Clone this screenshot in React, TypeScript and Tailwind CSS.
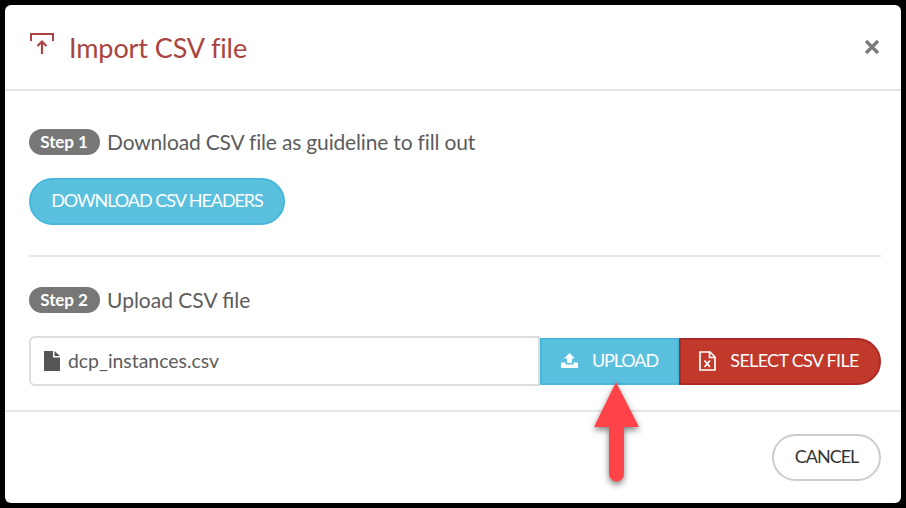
function StepBadge({ label }: { label: string }) {
  return (
    <span className="flex h-[26px] w-[71px] items-center justify-center rounded-[13px] bg-[#777777] pr-[1px] text-[17px] font-bold tracking-[-0.1px] text-white">
      {label}
    </span>
  );
}

export default function App() {
  return (
    <div className="h-[508px] w-[906px] overflow-hidden bg-black p-[5px] font-['Lato',sans-serif]">
      <div className="relative flex h-[498px] w-[896px] flex-col rounded-[6px] bg-white">
        {/* Header */}
        <div className="flex h-[86px] shrink-0 items-center justify-between border-b-2 border-[#e5e5e5] pl-6 pr-[21px]">
          <div className="flex items-center gap-[14px] text-[#a94442]">
            <svg width="26" height="26" viewBox="0 0 26 26" className="mb-[5px]" fill="none" stroke="currentColor" strokeWidth="2">
              <path d="M2 9V2h22v7" />
              <path d="M13 22V10M8.500 14 13 9.500l4.500 4.500" strokeWidth="2.200" />
            </svg>
            <h4 className="text-[27px] leading-none tracking-[-0.1px]">Import CSV file</h4>
          </div>
          <svg width="16" height="16" viewBox="0 0 16 16" stroke="#7a7a7a" strokeWidth="3.200">
            <path d="M2 2l12 12M14 2 2 14" />
          </svg>
        </div>

        {/* Body */}
        <div className="flex h-[321px] shrink-0 flex-col border-b-2 border-[#e5e5e5] pl-6 pr-5">
          <div className="mt-[38px] flex items-center gap-[7px]">
            <StepBadge label="Step 1" />
            <span className="text-[21px] leading-[26px] tracking-[-0.17px] text-[#5c5c5c]">Download CSV file as guideline to fill out</span>
          </div>
          <button className="mt-[23px] h-[47px] w-[256px] rounded-[24px] border-2 border-[#46b8da] bg-[#5bc0de] pb-[2px] text-[18px] tracking-[-1.05px] text-white">
            DOWNLOAD CSV HEADERS
          </button>
          <div className="mt-[30px] h-[2px] bg-[#e5e5e5]" />
          <div className="mt-[30px] flex items-center gap-[7px]">
            <StepBadge label="Step 2" />
            <span className="text-[21px] leading-[24px] text-[#5c5c5c]">Upload CSV file</span>
          </div>
          <div className="mt-[23px] flex h-[50px] items-center">
            <div className="flex h-[50px] w-[511px] shrink-0 items-center gap-[8px] rounded-l-[6px] border-2 border-[#dddddd] pl-[13px]">
              <svg width="16" height="20" viewBox="0 0 16 20" fill="#555555">
                <path d="M0 0h9v6.500h7V20H0z" />
                <path d="M10.500 0 16 5h-5.500z" />
              </svg>
              <span className="text-[19.400px] text-[#5c5c5c]">dcp_instances.csv</span>
            </div>
            <button className="flex h-[47px] w-[139px] shrink-0 items-center justify-center gap-[14px] border-2 border-[#46b8da] bg-[#5bc0de] pb-[2px] text-[18px] tracking-[-1.100px] text-white">
              <svg width="17" height="15" viewBox="0 0 17 15" fill="white" className="mt-[1px]">
                <path d="M8.500 0 14 5.500h-3V10H6V5.500H3z" />
                <path d="M0 9.500h4.500v2h8v-2H17V15H0z" />
              </svg>
              UPLOAD
            </button>
            <button className="flex h-[47px] w-[202px] shrink-0 items-center justify-center gap-[14px] rounded-r-[24px] border-2 border-[#ac2925] bg-[#c0392b] pb-[2px] pr-[2px] text-[18px] tracking-[-0.7px] text-white">
              <svg width="17" height="20" viewBox="0 0 17 20" fill="none" stroke="white" strokeWidth="1.700" className="mt-[1px]">
                <path d="M1 1h10l5 5v13H1z" />
                <path d="M10.500 1v5.500H16" />
                <path d="M5.500 9.500l5.500 6.500M11 9.500 5.500 16" strokeWidth="1.800" />
              </svg>
              SELECT CSV FILE
            </button>
          </div>
        </div>

        {/* Footer */}
        <div className="flex flex-1 items-start justify-end px-5 pt-[22px]">
          <button className="h-[47px] w-[109px] rounded-[24px] border-2 border-[#cccccc] bg-white pb-[2px] text-[18px] tracking-[-1px] text-[#333333]">
            CANCEL
          </button>
        </div>

        {/* Annotation arrow over the upload button */}
        <svg width="60" height="112" viewBox="0 0 60 112" className="absolute left-[581px] top-[374px] drop-shadow-[0_3px_3px_rgba(0,0,0,0.5)]" fill="#ff4349">
          <path d="M30 3 53 48H38v47a7.500 7.500 0 0 1-15 0V48H8z" />
        </svg>
      </div>
    </div>
  );
}
